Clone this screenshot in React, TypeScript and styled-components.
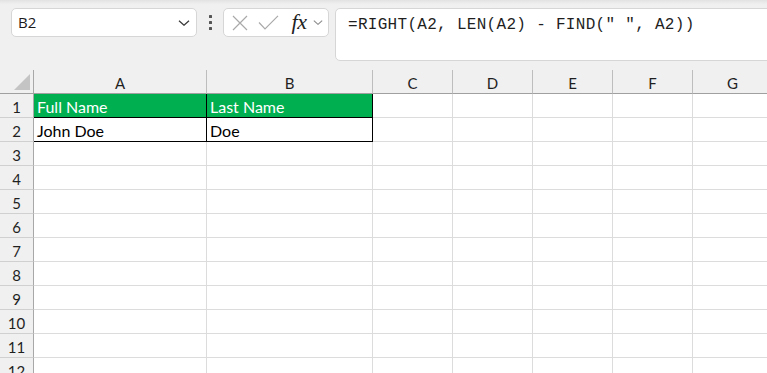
import React from "react";
import styled, { createGlobalStyle } from "styled-components";

const Global = createGlobalStyle`
  html, body { margin: 0; padding: 0; overflow: hidden; background: #f0f0f0; }
  body { width: 767px; height: 373px; }
  * { box-sizing: border-box; }
`;

const Page = styled.div`
  width: 767px;
  height: 373px;
  overflow: hidden;
  background: #f0f0f0;
  display: flex;
  flex-direction: column;
`;

const Toolbar = styled.div`
  height: 70px;
  flex: none;
  display: flex;
  align-items: flex-start;
  padding: 8px 0 0 11px;
  background: linear-gradient(#e2e2e2 0px, #efefef 4px, #f0f0f0 6px);
  overflow: hidden;
`;

const NameBox = styled.div`
  width: 186px;
  height: 29px;
  background: #fff;
  border: 1px solid #d6d6d6;
  border-radius: 5px;
  display: flex;
  align-items: center;
  justify-content: space-between;
  padding: 0 6px 0 6px;
  font-family: "Open Sans", "Liberation Sans", sans-serif;
  font-size: 15px;
  color: #1b1b1b;
`;

const NameText = styled.span`
  line-height: 1;
`;

const Dots = styled.div`
  width: 26px;
  height: 29px;
  display: flex;
  flex-direction: column;
  align-items: center;
  justify-content: center;
  gap: 3px;
  & > i {
    width: 3px;
    height: 3px;
    background: #555;
    border-radius: 0.5px;
    display: block;
  }
`;

const IconBox = styled.div`
  width: 106px;
  height: 29px;
  background: #fff;
  border: 1px solid #d6d6d6;
  border-radius: 5px;
  display: flex;
  align-items: center;
  padding-left: 8px;
`;

const IconSlot = styled.div<{ $w: number; $ml?: number }>`
  width: ${(p) => p.$w}px;
  margin-left: ${(p) => p.$ml ?? 0}px;
  height: 27px;
  display: flex;
  align-items: center;
  justify-content: center;
`;

const Fx = styled.span`
  font-family: "Liberation Serif", "DejaVu Serif", serif;
  font-style: italic;
  font-size: 22px;
  color: #222;
  line-height: 1;
  margin-top: -2px;
  letter-spacing: -0.5px;
`;

const FormulaBar = styled.div`
  flex: 1;
  height: 53px;
  margin-left: 6px;
  margin-right: -12px;
  background: #fff;
  border: 1px solid #d6d6d6;
  border-radius: 5px;
  padding: 6px 0 0 12px;
  font-family: "Liberation Mono", "DejaVu Sans Mono", monospace;
  font-size: 16px;
  letter-spacing: 0.3px;
  line-height: 20px;
  color: #1f1f1f;
  white-space: pre;
`;

const Sheet = styled.div`
  display: grid;
  grid-template-columns: 34px 173px 166px repeat(5, 80px);
  grid-auto-rows: 24px;
  background: #fff;
`;

const Corner = styled.div`
  background: #f0f0f0;
  border-right: 1px solid #a8a8a8;
  border-bottom: 1px solid #a0a0a0;
  position: relative;
`;

const CornerTri = styled.div`
  position: absolute;
  right: 3px;
  bottom: 3px;
  width: 0;
  height: 0;
  border-left: 16px solid transparent;
  border-bottom: 16px solid #c4c4c4;
`;

const ColHead = styled.div`
  background: #f0f0f0;
  border-right: 1px solid #bdbdbd;
  border-bottom: 1px solid #a0a0a0;
  display: flex;
  align-items: center;
  justify-content: center;
  padding-top: 3px;
  font-family: "Lato", "Open Sans", sans-serif;
  font-size: 15px;
  color: #1f1f1f;
`;

const RowHead = styled.div`
  background: #f0f0f0;
  border-right: 1px solid #a8a8a8;
  border-bottom: 1px solid #d0d0d0;
  display: flex;
  align-items: center;
  justify-content: center;
  padding-top: 2px;
  font-family: "Lato", "Open Sans", sans-serif;
  font-size: 15px;
  color: #1f1f1f;
`;

const Cell = styled.div<{ $fill?: boolean; $boxed?: boolean }>`
  background: ${(p) => (p.$fill ? "#00b050" : "#fff")};
  color: ${(p) => (p.$fill ? "#fff" : "#000")};
  border-right: 1px solid ${(p) => (p.$boxed ? "#000" : "#dcdcdc")};
  border-bottom: 1px solid ${(p) => (p.$boxed ? "#000" : "#dcdcdc")};
  display: flex;
  align-items: center;
  padding: 1px 0 0 3px;
  font-family: "Lato", "Open Sans", sans-serif;
  font-size: 16px;
  white-space: nowrap;
  overflow: hidden;
`;

const Chevron = ({ size, color }: { size: number; color: string }) => (
  <svg width={size} height={size / 2} viewBox="0 0 12 6" fill="none">
    <path d="M1 0.8 L6 5.2 L11 0.8" stroke={color} strokeWidth="1.3" />
  </svg>
);

const cols = ["A", "B", "C", "D", "E", "F", "G"];
const data: Record<string, string> = {
  A1: "Full Name",
  B1: "Last Name",
  A2: "John Doe",
  B2: "Doe",
};

export default function App() {
  const rows = Array.from({ length: 12 }, (_, i) => i + 1);
  return (
    <Page>
      <Global />
      <Toolbar>
        <NameBox>
          <NameText>B2</NameText>
          <Chevron size={12} color="#3a3a3a" />
        </NameBox>
        <Dots>
          <i />
          <i />
          <i />
        </Dots>
        <IconBox>
          <IconSlot $w={16}>
            <svg width="16" height="16" viewBox="0 0 16 16">
              <path d="M1 1 L15 15 M15 1 L1 15" stroke="#a9a9a9" strokeWidth="1.2" />
            </svg>
          </IconSlot>
          <IconSlot $w={21} $ml={10}>
            <svg width="21" height="15" viewBox="0 0 21 15">
              <path d="M1 7.5 L7 13.8 L20 0.8" stroke="#a9a9a9" strokeWidth="1.2" fill="none" />
            </svg>
          </IconSlot>
          <IconSlot $w={22} $ml={9}>
            <Fx>fx</Fx>
          </IconSlot>
          <IconSlot $w={12} $ml={2}>
            <Chevron size={10} color="#8a8a8a" />
          </IconSlot>
        </IconBox>
        <FormulaBar>{'=RIGHT(A2, LEN(A2) - FIND(" ", A2))'}</FormulaBar>
      </Toolbar>
      <Sheet>
        <Corner>
          <CornerTri />
        </Corner>
        {cols.map((c) => (
          <ColHead key={c}>{c}</ColHead>
        ))}
        {rows.map((r) => (
          <React.Fragment key={r}>
            <RowHead>{r}</RowHead>
            {cols.map((c, ci) => {
              const id = `${c}${r}`;
              const boxed = r <= 2 && ci <= 1;
              return (
                <Cell key={id} $fill={r === 1 && ci <= 1} $boxed={boxed}>
                  {data[id] ?? ""}
                </Cell>
              );
            })}
          </React.Fragment>
        ))}
      </Sheet>
    </Page>
  );
}
